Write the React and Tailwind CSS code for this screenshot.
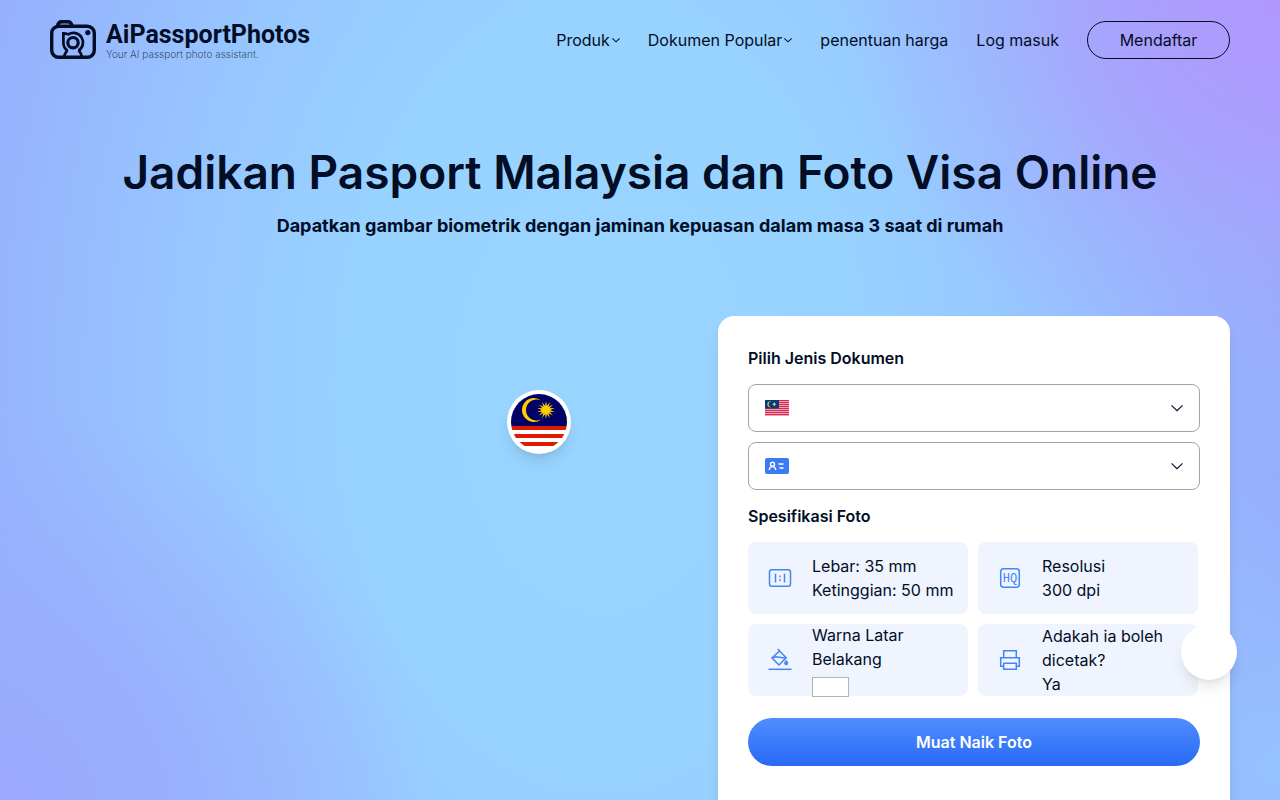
import React, { useState } from 'react';


const navLinks = [
    { id: 1, label: 'Produk', href: '#produk', menu: true },
    { id: 2, label: 'Dokumen Popular', href: '#dokumen', menu: true },
    { id: 3, label: 'penentuan harga', href: '#harga', menu: false },
    { id: 4, label: 'Log masuk', href: '#masuk', menu: false },
];

const Chevron = ({ className, strokeWidth = 1.5 }) => (
    <svg className={className} viewBox="0 0 14 14" fill="none" stroke="currentColor" strokeWidth={strokeWidth} aria-hidden="true">
        <path d="M.6 4 7 10.2 13.4 4" />
    </svg>
);

const CameraLogo = () => (
    <svg className="h-10 w-[46px] shrink-0" viewBox="0 0 46 40" fill="none" stroke="#020d26" strokeWidth="3.4" aria-hidden="true">
        <rect x="1.7" y="6.2" width="42.6" height="31.1" rx="7" />
        <path d="M7.5 6.2C8 3.2 9.3 1.7 11.5 1.7h6.500c2.200 0 3.500 1.500 4 4.500" />
        <path d="M28.500 30.600A9.600 9.600 0 0 0 18.300 14.300C16.500 13.800 15 13.500 13.400 13.400V22.700A9.600 9.600 0 0 0 17.500 30.600" strokeWidth="2.700" />
        <path d="M17.500 30.200Q15 33 14 37M28.500 30.200Q31 33 32 37" strokeWidth="2.700" />
        <circle cx="23" cy="22.700" r="5.200" strokeWidth="3.200" />
        <circle cx="37.800" cy="12.600" r="2.600" fill="#020d26" stroke="none" />
    </svg>
);

const RoundFlag = () => (
    <svg className="size-14 rounded-full" viewBox="0 0 56 56" role="img" aria-label="Malaysia">
        <rect width="56" height="56" fill="#fff" />
        <rect width="56" height="32" fill="#010066" />
        <path d="M0 32h56v4H0zM0 40h56v4H0zM0 48h56v4H0z" fill="#e01a00" />
        <path d="M30.300 6.500A12 12 0 1 0 30.300 25.500 10.600 10.600 0 1 1 30.300 6.500z" fill="#fc0" />
        <g fill="#fc0">
            <circle cx="35" cy="16" r="4.200" />
            {Array.from({ length: 14 }, (_, i) => (
                <path key={i} d="M35 7l1.100 6h-2.200z" transform={`rotate(${(i * 360) / 14} 35 16)`} />
            ))}
        </g>
    </svg>
);

const SmallFlag = () => (
    <svg className="h-4 w-6 shrink-0" viewBox="0 0 24 16" aria-hidden="true">
        <rect width="24" height="16" fill="#f3c3cd" />
        {[0, 2, 4, 6, 8, 10, 12, 14].map((y) => (
            <rect key={y} y={y} width="24" height="1.2" fill="#d6294f" />
        ))}
        <rect width="14" height="8.5" fill="#053a7c" />
        <path d="M6.400 1.500a3 3 0 1 0 0 5.600 2.800 2.800 0 0 1 0-5.600z" fill="#ffd23c" />
        <path d="M9.300 2.100l.7 1.500 1.500.7-1.500.7-.7 1.500-.7-1.500-1.500-.7 1.500-.7z" fill="#ffd23c" />
    </svg>
);

const IdIcon = () => (
    <svg className="h-4 w-6 shrink-0" viewBox="0 0 24 16" fill="none" stroke="#fff" strokeWidth="1.4" aria-hidden="true">
        <rect width="24" height="16" rx="2" fill="#3b7cf5" stroke="none" />
        <circle cx="7.5" cy="6.2" r="2" />
        <path d="M4.300 12c.2-2.200 1.300-3.400 3.200-3.400s3 1.200 3.200 3.400M13.500 6h5M14.500 10h4" />
    </svg>
);

const RatioIcon = () => (
    <svg className="size-6" viewBox="0 0 24 24" fill="none" stroke="#4285f5" strokeWidth="1.5" aria-hidden="true">
        <rect x="1.5" y="3.8" width="21" height="16.5" rx="2.2" />
        <path d="M7.500 7.800v8.700M16.500 7.800v8.700" />
        <path d="M12 9.500v1.700M12 13.200v1.700" />
    </svg>
);

const QualityIcon = () => (
    <svg className="size-6" viewBox="0 0 24 24" fill="none" aria-hidden="true">
        <rect x="2.7" y="2.7" width="18.6" height="18.6" rx="3" stroke="#4285f5" strokeWidth="1.5" />
        <text x="12" y="16" textAnchor="middle" fill="#4285f5" className="font-['Liberation_Mono',monospace] text-[12px]">HQ</text>
    </svg>
);

const BucketIcon = () => (
    <svg className="size-6" viewBox="0 0 24 24" fill="none" stroke="#4285f5" strokeWidth="1.5" aria-hidden="true">
        <path d="M9.800 1l2 2.200M11.500 3l6.700 6.800-7.200 7.200-7-7z" />
        <path d="M4 10l4-1.300 10 1.500" />
        <path d="M18.200 12.300c1.200 1.500 1.700 2.100 1.700 2.900a1.700 1.700 0 0 1-3.400 0c0-.8.5-1.400 1.700-2.900z" fill="#4285f5" strokeWidth=".8" />
        <path d="M.5 21.300h23" />
    </svg>
);

const PrinterIcon = () => (
    <svg className="size-6" viewBox="0 0 24 24" fill="none" stroke="#4285f5" strokeWidth="1.5" aria-hidden="true">
        <path d="M5.700 9.800V2.700h12.600v7.100" />
        <path d="M5.700 18.300h-3V9.800h18.600v8.500h-3" />
        <path d="M5.700 15.200h12.600v6.100H5.700z" />
    </svg>
);

const DocumentSelect = ({ id, label, icon }) => (
    <div className="flex h-12 items-center rounded-lg border border-[#a3a3a3] px-4">
        {icon}
        <select id={id} aria-label={label} className="h-full min-w-0 flex-1 appearance-none bg-transparent outline-none">
            <option value="" />
        </select>
        <Chevron className="pointer-events-none size-3 shrink-0" strokeWidth={1.3} />
    </div>
);

const SpecCard = ({ icon, children }) => (
    <div className="flex h-[72px] items-center rounded-lg bg-[#eff4ff] pl-5">
        <div className="mr-5 shrink-0">{icon}</div>
        <div>{children}</div>
    </div>
);

const App = () => {
    const [chatOpen, setChatOpen] = useState(false);

    return (
        <div className="min-h-screen bg-[radial-gradient(ellipse_34%_48%_at_100%_0%,#b098fd_0%,#ae9bfdcc_35%,#a8a4fd77_65%,#a8a4fd00_100%),radial-gradient(ellipse_34%_50%_at_0%_100%,#9ba9fe_0%,#9aacfebb_45%,#9aacfe00_100%),radial-gradient(ellipse_25%_35%_at_100%_95%,#94c2ff_0%,#94c2ff00_100%),radial-gradient(ellipse_54%_130%_at_47%_48%,#98d5ff_0%,#98d3ff_35%,#97c4ff_65%,#96b2fe_90%,#97adfe_100%)] bg-[#97adfe] font-['Inter','Noto_Sans',sans-serif] text-base text-[#020d26]">
            <header className="flex h-20 items-center justify-between px-[50px]">
                <a href="#home" className="flex items-center gap-[10px]">
                    <CameraLogo />
                    <span className="flex flex-col gap-px pt-[2px]">
                        <span className="font-['Roboto',sans-serif] text-[25px] leading-6 font-bold">AiPassportPhotos</span>
                        <span className="text-[10px] leading-3 font-light text-[#020d26]/70">Your AI passport photo assistant.</span>
                    </span>
                </a>
                <nav className="flex items-center gap-7">
                    {navLinks.map((link) => (
                        <a key={link.id} href={link.href} className="flex items-center gap-[2px]">
                            {link.label}
                            {link.menu && <Chevron className="size-2" strokeWidth={1.8} />}
                        </a>
                    ))}
                    <button type="button" className="h-[38px] w-[143px] rounded-full border border-[#020d26]">Mendaftar</button>
                </nav>
            </header>

            <main className="px-[50px] pt-16">
                <h1 className="text-center text-[46px] leading-14 font-semibold">Jadikan Pasport Malaysia dan Foto Visa Online</h1>
                <p className="pt-3 text-center text-lg leading-7 font-bold">Dapatkan gambar biometrik dengan jaminan kepuasan dalam masa 3 saat di rumah</p>

                <div className="flex pt-19">
                    <div className="flex flex-1 justify-end pt-[74px] pr-[147px]">
                        <div className="size-16 rounded-full bg-white p-1 shadow-lg">
                            <RoundFlag />
                        </div>
                    </div>

                    <section className="w-[512px] rounded-t-2xl bg-white px-[30px] pt-[30px] pb-10 shadow-lg">
                        <h2 className="leading-6 font-semibold">Pilih Jenis Dokumen</h2>
                        <div className="flex flex-col gap-[10px] pt-[14px]">
                            <DocumentSelect id="country" label="Negara" icon={<SmallFlag />} />
                            <DocumentSelect id="document" label="Jenis dokumen" icon={<IdIcon />} />
                        </div>

                        <h2 className="pt-[14px] leading-6 font-semibold">Spesifikasi Foto</h2>
                        <div className="grid grid-cols-2 gap-[10px] pt-[14px] pr-[2px]">
                            <SpecCard icon={<RatioIcon />}>
                                <p>Lebar: 35 mm</p>
                                <p>Ketinggian: 50 mm</p>
                            </SpecCard>
                            <SpecCard icon={<QualityIcon />}>
                                <p>Resolusi</p>
                                <p>300 dpi</p>
                            </SpecCard>
                            <SpecCard icon={<BucketIcon />}>
                                <p>Warna Latar</p>
                                <p>Belakang</p>
                                <div className="mt-[6px] h-5 w-[37px] border border-[#b3b3b3] bg-white" />
                            </SpecCard>
                            <SpecCard icon={<PrinterIcon />}>
                                <p>Adakah ia boleh</p>
                                <p>dicetak?</p>
                                <p>Ya</p>
                            </SpecCard>
                        </div>

                        <button type="button" className="mt-[22px] h-12 w-full rounded-full bg-linear-to-b from-[#4f8dff] to-[#2869f5] font-semibold text-white">
                            Muat Naik Foto
                        </button>
                    </section>
                </div>
            </main>

            <button
                type="button"
                aria-label="Bantuan"
                aria-expanded={chatOpen}
                onClick={() => setChatOpen(!chatOpen)}
                className="fixed right-[43px] bottom-[120px] size-14 rounded-full bg-white shadow-lg"
            />
        </div>
    );
};


export default App;
